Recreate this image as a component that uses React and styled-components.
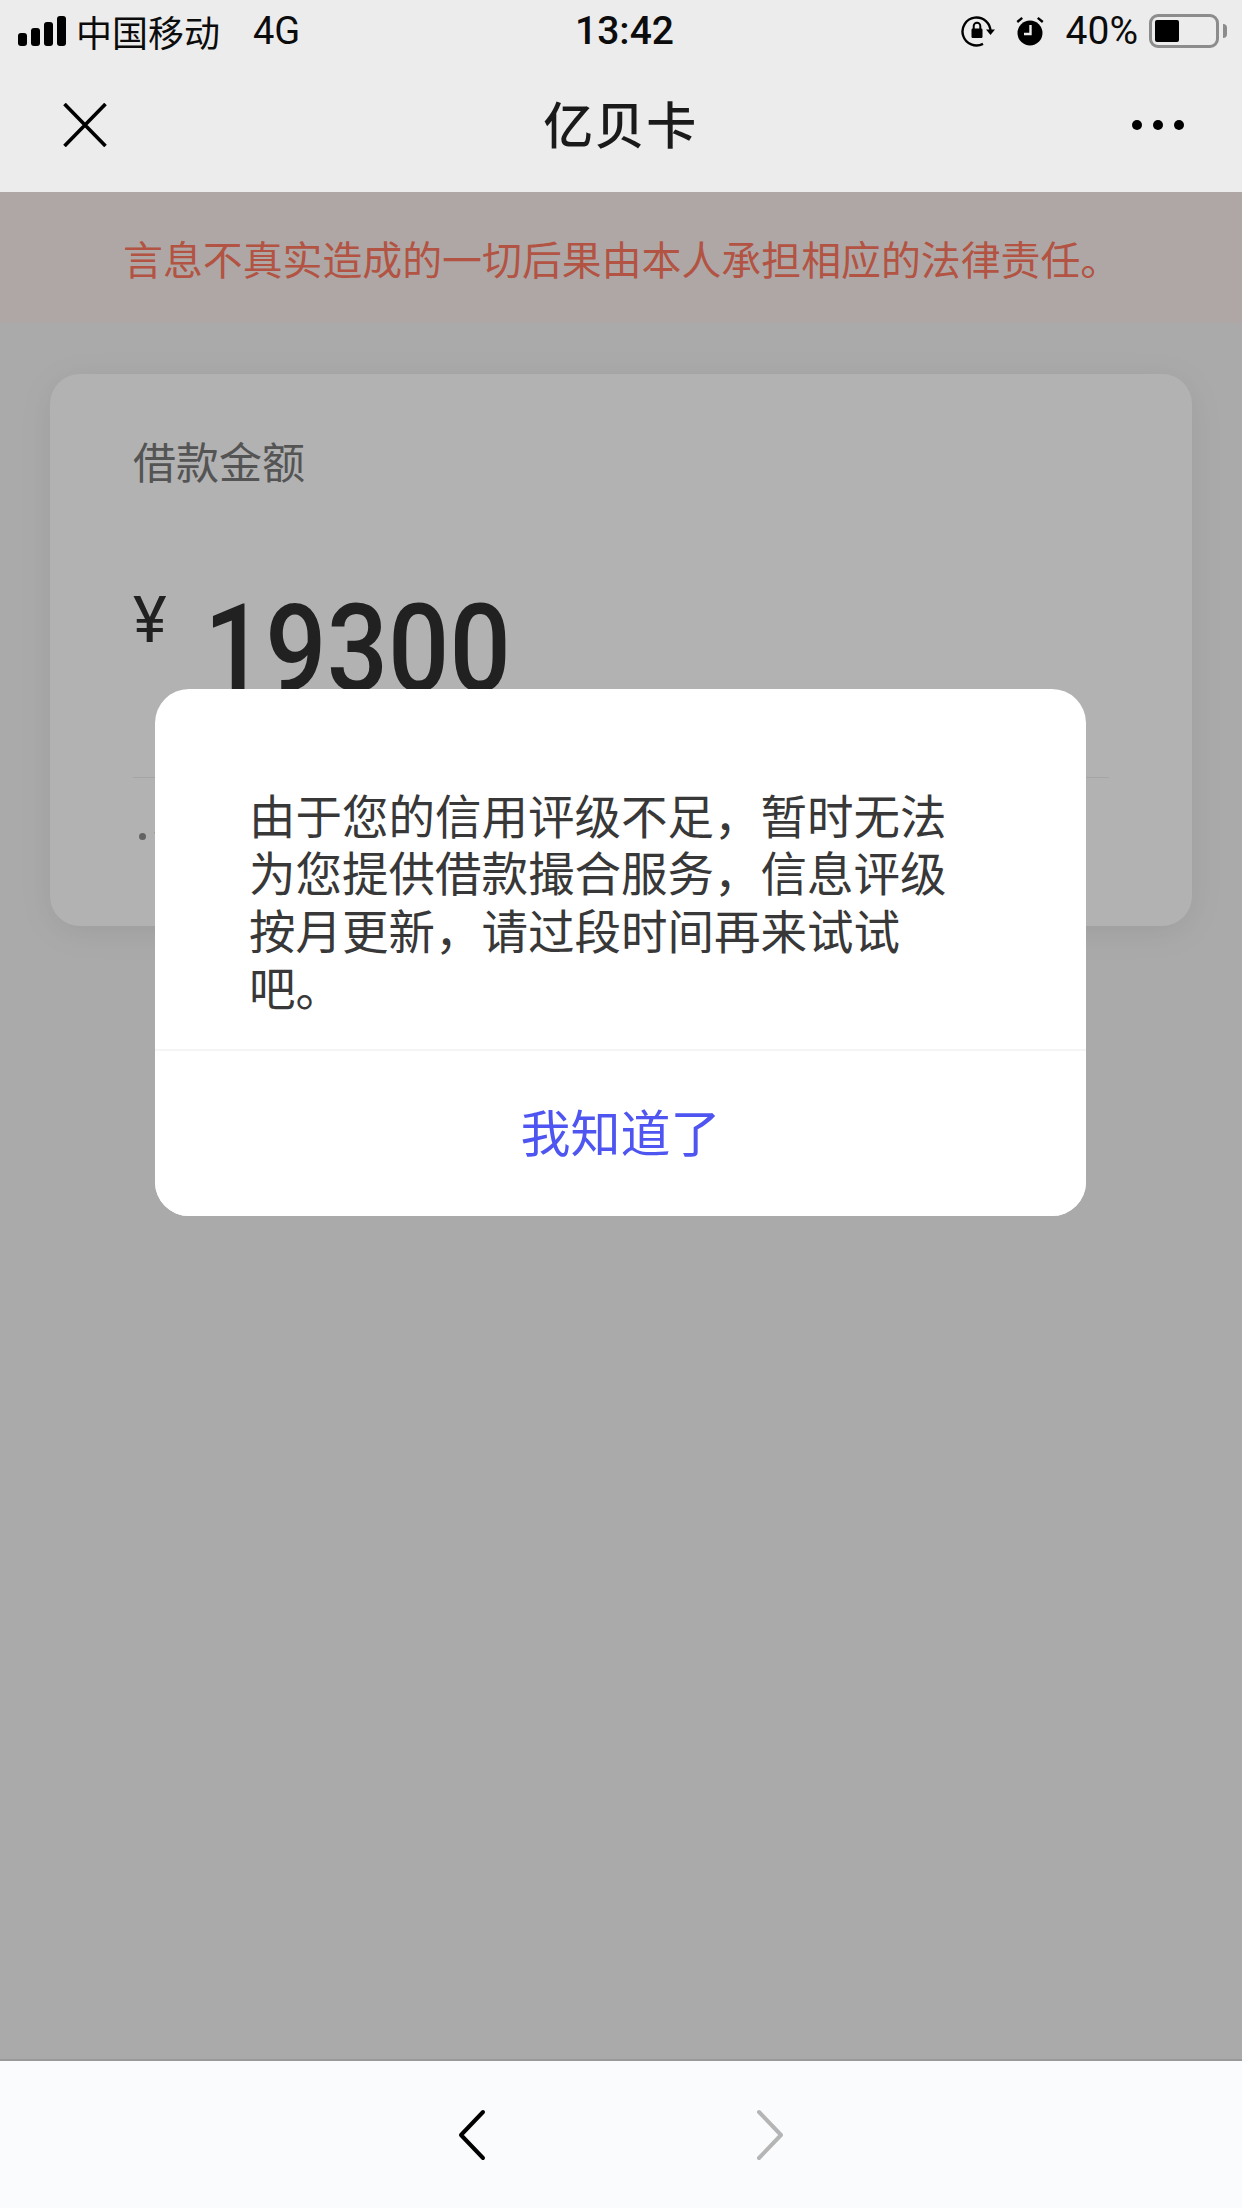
import React from "react";
import styled, { createGlobalStyle } from "styled-components";

const CJK = `"Noto Sans CJK SC", "Noto Sans", sans-serif`;

const Global = createGlobalStyle`
  html, body { margin: 0; padding: 0; background: #f4f4f4; }
  * { box-sizing: border-box; }
`;

const Screen = styled.div`
  width: 1242px;
  height: 2208px;
  display: flex;
  flex-direction: column;
  overflow: hidden;
  font-family: ${CJK};
`;

const TopArea = styled.header`
  background: #ececec;
  flex: none;
`;

const StatusBar = styled.div`
  height: 62px;
  display: grid;
  grid-template-columns: 1fr auto 1fr;
  align-items: center;
  padding: 0 15px 0 18px;
  color: #0c0c0c;
`;

const StatusLeft = styled.div`
  display: flex;
  align-items: center;
`;

const Carrier = styled.span`
  font-size: 36px;
  line-height: 60px;
  margin-left: 10px;
`;

const Network = styled.span`
  font-family: Roboto, sans-serif;
  font-size: 38px;
  line-height: 62px;
  margin-left: 33px;
`;

const Time = styled.span`
  font-family: Roboto, sans-serif;
  font-weight: 500;
  font-size: 39px;
  line-height: 62px;
  padding-left: 4px;
`;

const StatusRight = styled.div`
  display: flex;
  align-items: center;
  justify-content: flex-end;
`;

const Percent = styled.span`
  font-family: Roboto, sans-serif;
  font-size: 39px;
  line-height: 62px;
  margin: 0 11px 0 21px;
`;

const Battery = styled.div`
  position: relative;
  width: 70px;
  height: 34px;
  border: 3px solid #8c8c8c;
  border-radius: 9px;
  padding: 3px;
  margin-right: 8px;
`;

const BatteryFill = styled.div`
  width: 24px;
  height: 22px;
  background: #000;
  border-radius: 2px;
`;

const BatteryNub = styled.div`
  position: absolute;
  right: -11px;
  top: 7px;
  width: 4px;
  height: 14px;
  background: #8c8c8c;
  border-radius: 0 4px 4px 0;
`;

const NavBar = styled.nav`
  height: 130px;
  display: grid;
  grid-template-columns: 1fr auto 1fr;
  align-items: center;
  padding: 0 58px 4px 63px;
`;

const NavTitle = styled.h1`
  margin: 0 6px 6px 0;
  font-size: 50px;
  font-weight: 500;
  line-height: 60px;
  letter-spacing: 1.5px;
  color: #1a1a1a;
`;

const NavRight = styled.div`
  display: flex;
  justify-content: flex-end;
`;

const Dots = styled.div`
  display: flex;
  gap: 11px;
`;

const Dot = styled.span`
  width: 10px;
  height: 10px;
  border-radius: 50%;
  background: #000;
`;

const Content = styled.main`
  position: relative;
  flex: 1;
  background: #f4f4f4;
`;

const Banner = styled.div`
  height: 131px;
  background: #fbf0ed;
  color: #ff7860;
  font-size: 39.9px;
  line-height: 131px;
  padding-left: 123px;
  white-space: nowrap;
`;

const Card = styled.section`
  height: 552px;
  margin: 51px 50px 0;
  padding: 56px 83px 0;
  background: #fff;
  border-radius: 30px;
  box-shadow: 0 6px 34px rgba(0, 0, 0, 0.08);
`;

const CardLabel = styled.div`
  font-size: 43px;
  line-height: 60px;
  color: #797979;
`;

const AmountRow = styled.div`
  display: flex;
  align-items: flex-start;
  height: 184px;
  margin-top: 104px;
  border-bottom: 1px solid #ededed;
`;

const Currency = styled.span`
  font-family: Roboto, sans-serif;
  font-size: 64px;
  font-weight: 400;
  line-height: 54px;
  color: #303030;
  width: 71px;
`;

const Amount = styled.span`
  font-family: Roboto, sans-serif;
  font-weight: 500;
  font-size: 122px;
  line-height: 112px;
  color: #303030;
  display: inline-block;
  transform: scaleX(0.885);
  transform-origin: left top;
`;

const Note = styled.div`
  display: flex;
  align-items: center;
  margin-top: 36px;
  font-size: 34px;
  line-height: 44px;
  color: #8f8f8f;
  white-space: nowrap;
`;

const NoteDot = styled.span`
  width: 7px;
  height: 7px;
  margin: 0 7px 0 6px;
  border-radius: 50%;
  background: #8f8f8f;
`;

const Overlay = styled.div`
  position: absolute;
  inset: 0;
  background: rgba(0, 0, 0, 0.3);
`;

const Dialog = styled.div`
  position: absolute;
  left: 155px;
  top: 497px;
  width: 931px;
  height: 527px;
  background: #fff;
  border-radius: 34px;
  display: flex;
  flex-direction: column;
  overflow: hidden;
`;

const DialogBody = styled.p`
  flex: none;
  height: 360px;
  margin: 0;
  padding: 96px 130px 0 94px;
  font-size: 46.5px;
  line-height: 57.3px;
  color: #383838;
`;

const DialogAction = styled.button`
  flex: 1;
  border: 0;
  border-top: 2px solid #f5f5f5;
  background: #fff;
  color: #4f55f0;
  font-family: ${CJK};
  font-size: 50px;
  padding: 0 0 8px;
`;

const BottomBar = styled.footer`
  flex: none;
  height: 149px;
  background: #fafbfd;
  border-top: 2px solid #999;
  display: flex;
  justify-content: center;
  align-items: center;
  gap: 270px;
`;

const SignalBars = () => (
  <svg width="48" height="30" viewBox="0 0 48 30" aria-hidden="true">
    <rect x="0" y="17" width="9" height="13" rx="3" fill="#000" />
    <rect x="13" y="12" width="9" height="18" rx="3" fill="#000" />
    <rect x="26" y="6" width="9" height="24" rx="3" fill="#000" />
    <rect x="39" y="0" width="9" height="30" rx="3" fill="#000" />
  </svg>
);

const RotationLock = () => (
  <svg width="34" height="32" viewBox="0 0 34 32" aria-hidden="true">
    <path d="M29.5 17 A14 14 0 1 0 22 28.9" fill="none" stroke="#000" strokeWidth="2.4" />
    <path d="M25 14.5 L34 14.5 L29.5 20 Z" fill="#000" />
    <rect x="10.5" y="13.5" width="11" height="9.5" rx="1.2" fill="#000" />
    <path d="M12.7 14 V11 a3.3 3.3 0 0 1 6.6 0 V14" fill="none" stroke="#000" strokeWidth="2" />
  </svg>
);

const Alarm = () => (
  <svg width="30" height="30" viewBox="0 0 30 30" style={{ marginLeft: 20 }} aria-hidden="true">
    <circle cx="15" cy="17" r="12.5" fill="#000" />
    <path d="M1.5 5 L6.5 1 L8 2.8 L3 7 Z M28.5 5 L23.5 1 L22 2.8 L27 7 Z" fill="#000" />
    <path d="M15.5 9 V18 H9" fill="none" stroke="#ececec" strokeWidth="2.4" />
  </svg>
);

const CloseIcon = () => (
  <svg width="44" height="44" viewBox="0 0 44 44" aria-hidden="true">
    <path d="M1.5 1 L42.5 43 M42.5 1 L1.5 43" stroke="#000" strokeWidth="3.6" fill="none" />
  </svg>
);

const Chevron = ({ flip, color }) => (
  <svg width="28" height="52" viewBox="0 0 28 52" aria-hidden="true">
    <path
      d={flip ? "M3 3 L25 26 L3 49" : "M25 3 L3 26 L25 49"}
      fill="none"
      stroke={color}
      strokeWidth="4"
      strokeLinecap="round"
      strokeLinejoin="round"
    />
  </svg>
);

export default function App() {
  return (
    <Screen>
      <Global />
      <TopArea>
        <StatusBar>
          <StatusLeft>
            <SignalBars />
            <Carrier>中国移动</Carrier>
            <Network>4G</Network>
          </StatusLeft>
          <Time>13:42</Time>
          <StatusRight>
            <RotationLock />
            <Alarm />
            <Percent>40%</Percent>
            <Battery>
              <BatteryFill />
              <BatteryNub />
            </Battery>
          </StatusRight>
        </StatusBar>
        <NavBar>
          <CloseIcon />
          <NavTitle>亿贝卡</NavTitle>
          <NavRight>
            <Dots>
              <Dot />
              <Dot />
              <Dot />
            </Dots>
          </NavRight>
        </NavBar>
      </TopArea>
      <Content>
        <Banner>言息不真实造成的一切后果由本人承担相应的法律责任。</Banner>
        <Card>
          <CardLabel>借款金额</CardLabel>
          <AmountRow>
            <Currency>¥</Currency>
            <Amount>19300</Amount>
          </AmountRow>
          <Note>
            <NoteDot />注
          </Note>
        </Card>
        <Overlay />
        <Dialog>
          <DialogBody>由于您的信用评级不足，暂时无法为您提供借款撮合服务，信息评级按月更新，请过段时间再来试试吧。</DialogBody>
          <DialogAction>我知道了</DialogAction>
        </Dialog>
      </Content>
      <BottomBar>
        <Chevron color="#000" />
        <Chevron flip color="#b5b5b5" />
      </BottomBar>
    </Screen>
  );
}
